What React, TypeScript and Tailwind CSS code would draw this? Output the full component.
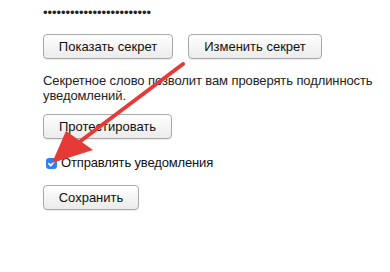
import React from 'react';

const Btn: React.FC<{ children: React.ReactNode; className?: string }> = ({ children, className = '' }) => (
  <button
    className={`block h-[25px] rounded-[4px] border border-[#a9a9a9] bg-gradient-to-b from-white to-[#ebebeb] text-[13px] leading-[23px] text-[#111] shadow-[0_1px_1px_rgba(0,0,0,0.08)] ${className}`}
  >
    {children}
  </button>
);

const App: React.FC = () => {
  return (
    <div className="relative w-[390px] h-[272px] overflow-hidden bg-white pl-[43px] pt-[5px] text-[13px] text-[#222] font-['Liberation_Sans',Arial,sans-serif]">
      <div className="h-[16px] leading-[16px] tracking-[-0.05px]">{'•'.repeat(24)}</div>

      <div className="mt-[13px] flex gap-[15px]">
        <Btn className="w-[130px]">Показать секрет</Btn>
        <Btn className="w-[134px]">Изменить секрет</Btn>
      </div>

      <p className="mt-[14px] w-[335px] leading-[15px] tracking-[-0.1px]">
        Секретное слово позволит вам проверять подлинность уведомлений.
      </p>

      <Btn className="mt-[11px] w-[129px]">Протестировать</Btn>

      <label className="mt-[16px] flex items-center gap-[4px] pl-[3px] h-[16px]">
        <span className="flex h-[11px] w-[11px] items-center justify-center rounded-[3px] bg-[#2f7ff0]">
          <svg width="9" height="9" viewBox="0 0 10 10">
            <path d="M2 5.2 L4.2 7.4 L8.2 2.6" fill="none" stroke="white" strokeWidth="1.8" strokeLinecap="round" strokeLinejoin="round" />
          </svg>
        </span>
        <span className="text-[13px] tracking-[-0.15px] text-[#111]">Отправлять уведомления</span>
      </label>

      <Btn className="mt-[14px] w-[96px]">Сохранить</Btn>

      <svg className="absolute left-0 top-0 pointer-events-none" width="390" height="272">
        <line x1="183" y1="64" x2="78" y2="143" stroke="#e53a35" strokeWidth="4" strokeLinecap="round" />
        <polygon points="52,163 66,131 93,150" fill="#e53a35" />
      </svg>
    </div>
  );
};

export default App;
